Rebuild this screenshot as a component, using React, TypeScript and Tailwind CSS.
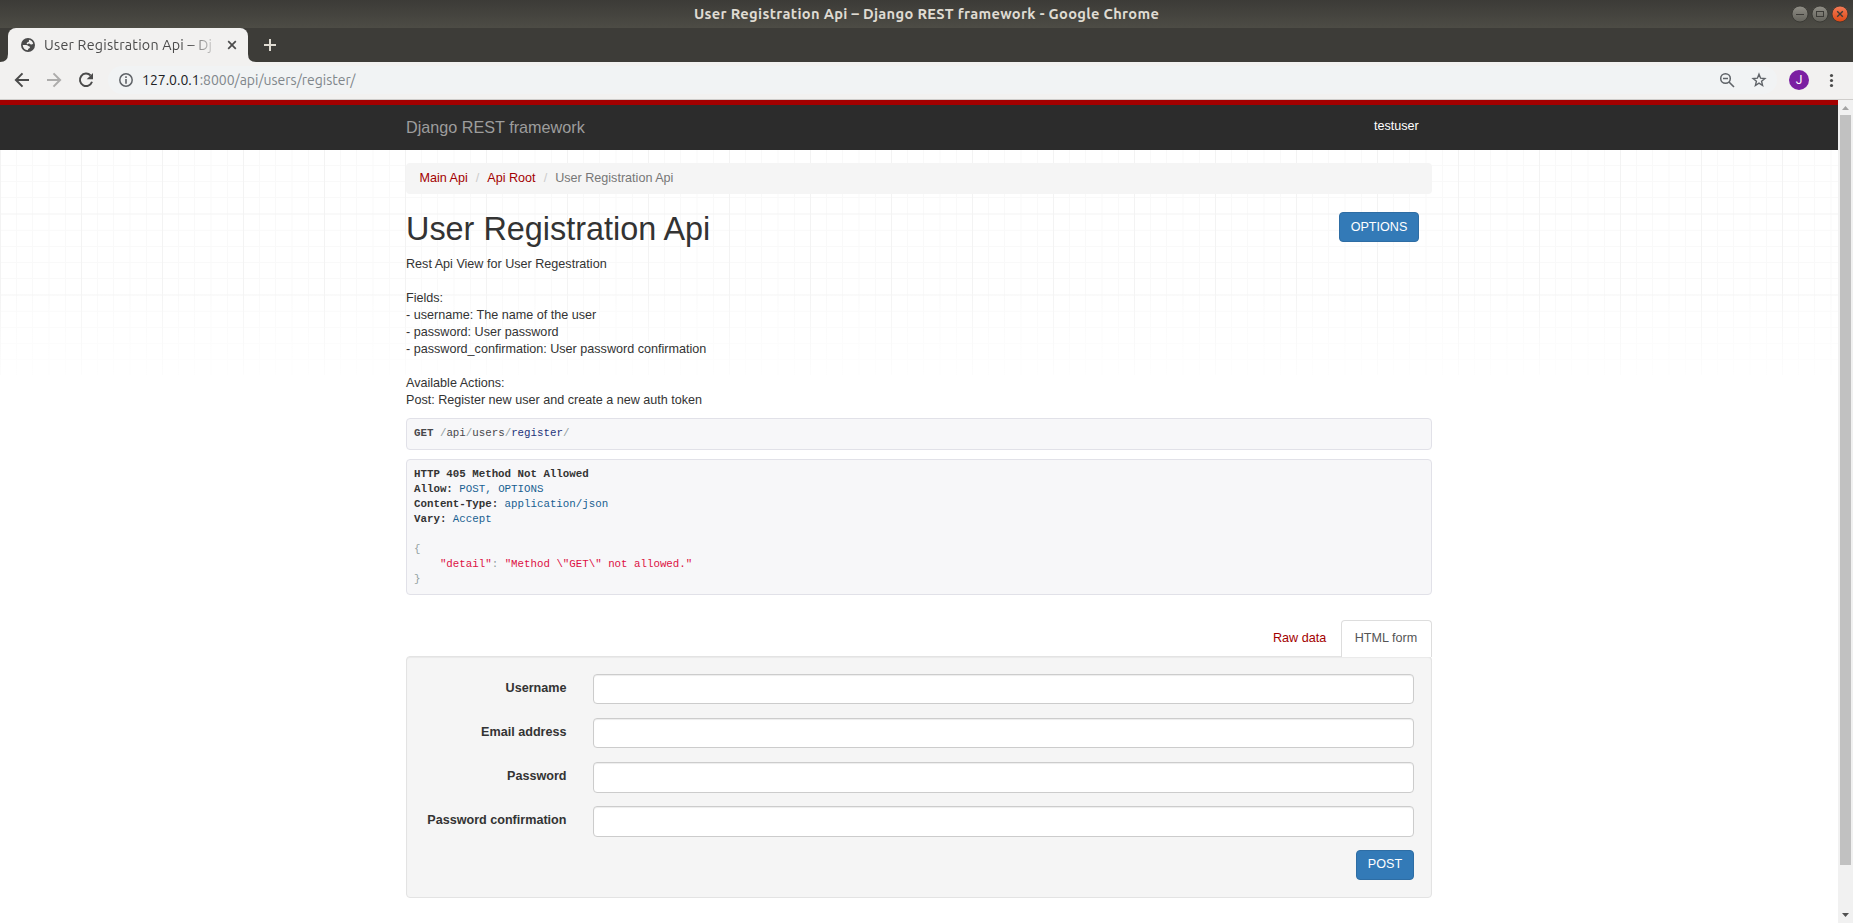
import React from "react";

const chromeFont = "font-['Ubuntu','Noto_Sans',sans-serif]";

function WindowButtons() {
  return (
    <svg width="60" height="28" viewBox="0 0 60 28" className="shrink-0">
      <defs>
        <linearGradient id="grayBtn" x1="0" y1="0" x2="0" y2="1">
          <stop offset="0" stopColor="#908e86" />
          <stop offset="1" stopColor="#63625b" />
        </linearGradient>
        <linearGradient id="redBtn" x1="0" y1="0" x2="0" y2="1">
          <stop offset="0" stopColor="#f47c58" />
          <stop offset="1" stopColor="#dd4814" />
        </linearGradient>
      </defs>
      <circle cx="10" cy="14" r="8" fill="url(#grayBtn)" stroke="#34332f" strokeWidth="0.8" />
      <path d="M6 14.5h8" stroke="#3c3b37" strokeWidth="1" />
      <circle cx="30" cy="14" r="8" fill="url(#grayBtn)" stroke="#34332f" strokeWidth="0.8" />
      <rect x="26.5" y="11.5" width="7" height="5" fill="none" stroke="#3c3b37" />
      <circle cx="50" cy="14" r="8" fill="url(#redBtn)" stroke="#34332f" strokeWidth="0.8" />
      <path d="M47.2 11.2l5.6 5.6M52.8 11.2l-5.6 5.6" stroke="#3c3b37" strokeWidth="1.4" />
    </svg>
  );
}

function TitleBar() {
  return (
    <div className="flex h-7 items-center bg-linear-to-b from-[#3c3b37] to-[#4d4c45]">
      <div className="w-[694px] shrink-0" />
      <div className={`w-[1096px] whitespace-nowrap text-[14.67px] leading-7 font-bold text-[#dfdbd2] ${chromeFont}`}>
        <span className="tracking-[0.315px]">User Registration Api – Django REST framework - Google Chrome</span>
      </div>
      <WindowButtons />
    </div>
  );
}

function TabStrip() {
  return (
    <div className="flex h-[34px] bg-[#3d3c38]">
      <svg width="8" height="34" className="shrink-0">
        <path d="M8 26v8H0q8 0 8-8z" fill="#f2f1f0" />
      </svg>
      <div className="flex w-60 items-center rounded-t-lg bg-[#f2f1f0] pl-[13px]">
        <svg width="14" height="14" viewBox="0 0 14 14" className="shrink-0">
          <circle cx="7" cy="7" r="7" fill="#4b4b4b" />
          <path d="M8 1.700c2 .4 3.700 1.800 4.200 3.700-.6.9-1.300 1.300-2.300 1.100-.8-.2-.9-.9-1.700-1-.8 0-1 .8-1.800.7-.9-.2-.9-1.300-.2-1.700.7-.4 1.500-.2 1.800-.9.200-.6-.3-1.200 0-1.900z" fill="#f2f1f0" />
          <path d="M1.700 7h3.600c1.200 0 1.600 1.100 2.600 1.300 1 .2 1.300 1 .8 1.700-.4.5-1.200.4-1.500 1-.2.500-.2.900-.5 1.300C3.900 12.100 1.900 9.900 1.700 7z" fill="#f2f1f0" />
        </svg>
        <div
          className={`ml-[9px] h-6 w-[175px] overflow-hidden whitespace-nowrap text-[14.3px] leading-6 tracking-[0.21px] text-[#4b4b4b] [mask-image:linear-gradient(to_right,black_143px,transparent_176px)] ${chromeFont}`}
        >
          User Registration Api – Dj
        </div>
        <svg width="10" height="10" viewBox="0 0 10 10" className="ml-[8px]">
          <path d="M1.200 1.200l7.600 7.600M8.800 1.200L1.200 8.800" stroke="#4b4b4b" strokeWidth="1.700" />
        </svg>
      </div>
      <svg width="40" height="34">
        <path d="M0 26v8h8q-8 0-8-8z" fill="#f2f1f0" />
        <path d="M22 11v12M16 17h12" stroke="#dfdbd2" strokeWidth="2" />
      </svg>
    </div>
  );
}

function Toolbar() {
  return (
    <div className="flex h-[38px] items-start border-b border-[#cfcdcb] bg-[#f2f1f0] pt-1">
      <svg width="108" height="28" viewBox="0 0 108 28" className="shrink-0">
        <path d="M29 14H16.500M22.500 7.400L15.900 14l6.600 6.600" fill="none" stroke="#4b4b4b" strokeWidth="2" />
        <path d="M47 14h12.500M53.500 7.400L60.100 14l-6.600 6.600" fill="none" stroke="#adacab" strokeWidth="2" />
        <path d="M90.600 9.500A6.200 6.200 0 1 0 92 15.800" fill="none" stroke="#4b4b4b" strokeWidth="2" />
        <path d="M93 7v6.200h-6.300z" fill="#4b4b4b" />
      </svg>
      <div className="flex h-7 w-[1669px] shrink-0 items-center rounded-full bg-[#f1f3f4] pl-[11px]">
        <svg width="14" height="14" viewBox="0 0 14 14">
          <circle cx="7" cy="7" r="6.200" fill="none" stroke="#5f6368" strokeWidth="1.500" />
          <path d="M7 3.300v1.600M7 6.100v4.600" stroke="#5f6368" strokeWidth="1.600" />
        </svg>
        <div className={`ml-[9px] flex-1 whitespace-nowrap text-[14px] leading-7 tracking-[-0.01px] text-[#80868b] ${chromeFont}`}>
          <span className="text-[#202124]">127.0.0.1</span>:8000/api/users/register/
        </div>
        <svg width="60" height="28" viewBox="0 0 60 28" className="mr-[1px]">
          <circle cx="9.500" cy="12.500" r="4.800" fill="none" stroke="#5f6368" strokeWidth="1.500" />
          <path d="M7 12.500h5M13 16l5 5" stroke="#5f6368" strokeWidth="1.600" />
          <path
            d="M43 8.200l1.600 4 4.300.3-3.300 2.800 1 4.200-3.600-2.300-3.600 2.300 1-4.200-3.300-2.800 4.300-.3z"
            fill="none"
            stroke="#5f6368"
            strokeWidth="1.400"
          />
        </svg>
      </div>
      <div className="mt-1 ml-3 flex size-5 items-center justify-center rounded-full bg-[#7b1fa2] font-['Roboto',sans-serif] text-[12px] text-white">
        J
      </div>
      <svg width="20" height="28" className="ml-[12px]">
        <circle cx="10.500" cy="9.500" r="1.600" fill="#4b4b4b" />
        <circle cx="10.500" cy="14.500" r="1.600" fill="#4b4b4b" />
        <circle cx="10.500" cy="19.500" r="1.600" fill="#4b4b4b" />
      </svg>
    </div>
  );
}

function Scrollbar() {
  return (
    <div className="flex w-[15px] shrink-0 flex-col items-center bg-[#f1f1f1]">
      <svg width="15" height="15">
        <path d="M4 10h7L7.500 6z" fill="#a3a3a3" />
      </svg>
      <div className="h-[750px] w-[11px] bg-[#c1c1c1]" />
      <div className="flex-1" />
      <svg width="15" height="15">
        <path d="M4 5h7L7.500 9z" fill="#505050" />
      </svg>
    </div>
  );
}

function Grid() {
  return (
    <svg width="1838" height="225" className="absolute top-0 left-0">
      <defs>
        <pattern id="grid" width="81" height="81" y="-18" patternUnits="userSpaceOnUse">
          <path d="M16.500 0v81M32.500 0v81M49 0v81M65.500 0v81M0 17.300h81M0 33.500h81M0 49.500h81M0 65.500h81" stroke="#f9f9f9" />
          <path d="M0.500 0v81M0 1h81" stroke="#f3f3f3" />
        </pattern>
        <linearGradient id="fade" x1="0" y1="0" x2="0" y2="1">
          <stop offset="0.600" stopColor="#fff" stopOpacity="0" />
          <stop offset="1" stopColor="#fff" stopOpacity="0.800" />
        </linearGradient>
      </defs>
      <rect width="1838" height="225" fill="url(#grid)" />
      <rect width="1838" height="225" fill="url(#fade)" />
    </svg>
  );
}

function Field({ label, size }: { label: string; size: string }) {
  return (
    <div className="flex h-11">
      <label className="w-[159.5px] pt-[5px] text-right text-[12.6px] leading-[18px] font-bold">{label}</label>
      <input className={`ml-[26.5px] w-[821px] rounded-[4px] border border-[#ccc] bg-white shadow-[inset_0_1px_1px_rgba(0,0,0,0.075)] ${size}`} />
    </div>
  );
}

function Breadcrumbs() {
  return (
    <div className="mt-[13px] flex h-[31px] rounded-[4px] bg-[#f5f5f5] pl-[13.5px] leading-[30px]">
      <span className="text-[#a30000]">Main Api</span>
      <span className="w-[19.5px] text-center text-[#ccc]">/</span>
      <span className="text-[#a30000]">Api Root</span>
      <span className="w-[19.5px] text-center text-[#ccc]">/</span>
      <span className="text-[#777]">User Registration Api</span>
    </div>
  );
}

const preClass =
  "rounded-[4px] border border-[#e1e1e8] bg-[#f7f7f9] pl-[7px] font-['Liberation_Mono',monospace] text-[10.8px] leading-[15px] tracking-[-0.01px] text-[#333]";

export default function App() {
  return (
    <div className="flex h-[923px] w-[1853px] flex-col overflow-hidden bg-white">
      <TitleBar />
      <TabStrip />
      <Toolbar />
      <div className="flex h-[823px] font-['Liberation_Sans',Arial,sans-serif] text-[12.6px] text-[#333]">
        <div className="flex w-[1838px] flex-col">
          <div className="flex h-[50px] shrink-0 border-t-5 border-[#a30000] bg-[#2c2c2c] pl-[406px]">
            <span className="w-[968px] pt-[12px] text-[16.2px] leading-5 text-[#9d9d9d]">Django REST framework</span>
            <span className="pt-[12px] leading-[18px] text-white">testuser</span>
          </div>
          <div className="relative flex-1">
            <Grid />
            <main className="relative ml-[406px] flex w-[1026px] flex-col">
              <Breadcrumbs />
              <div className="mt-[18px] flex h-[43px] justify-between pr-[13px]">
                <h1 className="-mt-px text-[32.4px] leading-[36px] font-medium">User Registration Api</h1>
                <button className="h-[30px] w-20 rounded-[4px] border border-[#2e6da4] bg-[#337ab7] pt-[1px] text-white">OPTIONS</button>
              </div>
              <p className="h-[163px] pt-px whitespace-pre leading-[17px]">
                {`Rest Api View for User Regestration

Fields:
- username: The name of the user
- password: User password
- password_confirmation: User password confirmation

Available Actions:
Post: Register new user and create a new auth token`}
              </p>
              <pre className={`h-8 pt-[7px] ${preClass}`}>
                <b className="text-[#48484c]">GET</b> <span className="text-[#93a1a1]">/</span>
                <span className="text-[#48484c]">api</span>
                <span className="text-[#93a1a1]">/</span>
                <span className="text-[#48484c]">users</span>
                <span className="text-[#93a1a1]">/</span>
                <span className="text-[#1e347b]">register</span>
                <span className="text-[#93a1a1]">/</span>
              </pre>
              <pre className={`mt-[9px] h-[136px] pt-[7px] ${preClass}`}>
                <b>HTTP 405 Method Not Allowed</b>
                {"\n"}
                <b>Allow:</b> <span className="text-[#195f91]">POST, OPTIONS</span>
                {"\n"}
                <b>Content-Type:</b> <span className="text-[#195f91]">application/json</span>
                {"\n"}
                <b>Vary:</b> <span className="text-[#195f91]">Accept</span>
                {"\n\n"}
                <span className="text-[#93a1a1]">{"{"}</span>
                {"\n    "}
                <span className="text-[#dd1144]">"detail"</span>
                <span className="text-[#93a1a1]">:</span> <span className="text-[#dd1144]">{'"Method \\"GET\\" not allowed."'}</span>
                {"\n"}
                <span className="text-[#93a1a1]">{"}"}</span>
              </pre>
              <div className="z-10 mt-[25px] -mb-px flex h-[37px] justify-end">
                <span className="w-[68px] pt-[9px] leading-[18px] text-[#a30000]">Raw data</span>
                <span className="w-[91px] rounded-t-[4px] border border-b-0 border-[#ddd] bg-white pt-[8px] pr-px text-center leading-[18px] text-[#555]">
                  HTML form
                </span>
              </div>
              <form className="h-[242px] rounded-[4px] border border-[#e3e3e3] bg-[#f5f5f5] pt-[17px] shadow-[inset_0_1px_1px_rgba(0,0,0,0.05)]">
                <Field label="Username" size="h-[30px]" />
                <Field label="Email address" size="h-[30px]" />
                <Field label="Password" size="h-[31px]" />
                <Field label="Password confirmation" size="h-[31px]" />
                <div className="flex justify-end pr-[17px]">
                  <button type="button" className="h-[30px] w-[58px] rounded-[4px] border border-[#2e6da4] bg-[#337ab7] pb-[2px] text-white">
                    POST
                  </button>
                </div>
              </form>
            </main>
          </div>
        </div>
        <Scrollbar />
      </div>
    </div>
  );
}
